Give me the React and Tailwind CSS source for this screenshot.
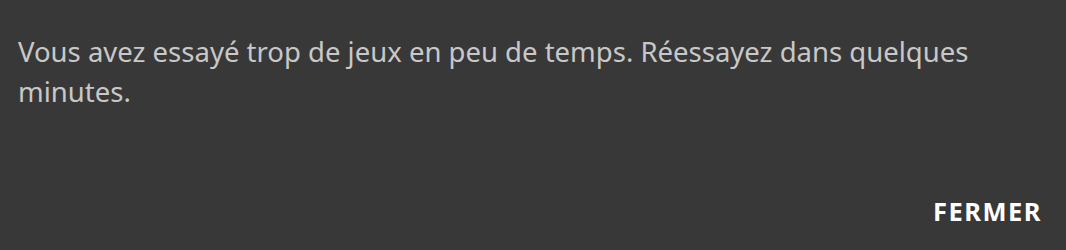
import React from "react";

const App = () => {
  return (
    <div className="w-[1066px] h-[250px] bg-[#383838] flex flex-col justify-between font-['Noto_Sans',sans-serif]">
      {/* Message */}
      <p className="pl-[18px] pr-6 pt-[32px] text-[27.5px] leading-[40px] text-[#c8c8c8]">
        Vous avez essayé trop de jeux en peu de temps. Réessayez dans quelques minutes.
      </p>

      {/* Close button */}
      <div className="flex justify-end pr-[24px] pb-[26px]">
        <button
          type="button"
          className="text-[25.5px] font-bold leading-none text-white tracking-[1.5px]"
        >
          FERMER
        </button>
      </div>
    </div>
  );
};

export default App;
